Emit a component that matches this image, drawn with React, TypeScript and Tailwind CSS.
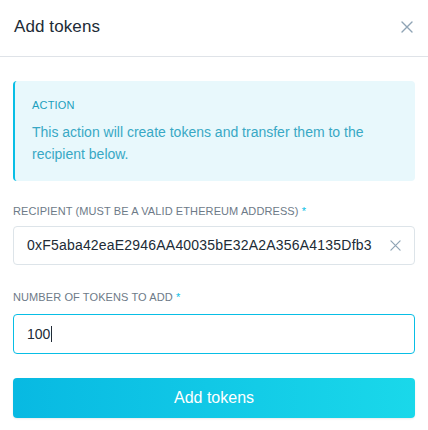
import React from "react";

const font = { fontFamily: '"Liberation Sans", Arial, sans-serif' };

function XIcon({ size, color, stroke = 1.5 }: { size: number; color: string; stroke?: number }) {
  return (
    <svg width={size} height={size} viewBox="0 0 12 12" fill="none">
      <path d="M1 1L11 11M11 1L1 11" stroke={color} strokeWidth={stroke} strokeLinecap="round" />
    </svg>
  );
}

export default function App() {
  return (
    <div className="w-[428px] h-[430px] bg-white overflow-hidden" style={font}>
      <div className="h-[57px] border-b border-[#dfe3e8] flex items-center justify-between pl-[14px] pr-[15px] pb-[2px]">
        <span className="text-[17px] text-[#212b36] tracking-[0.1px]">Add tokens</span>
        <XIcon size={12} color="#8fa4b5" stroke={1.4} />
      </div>
      <div className="px-[13px]">
        <div className="mt-[24px] h-[100px] rounded-[4px] border-l-2 border-[#08bee5] bg-[#e8f8fc] pl-[17px] pr-4 pt-[16px]">
          <div className="text-[11px] leading-[16px] text-[#1c9fbd] tracking-[0.2px]">ACTION</div>
          <div className="mt-[8px] text-[14px] leading-[22px] text-[#38a8c5]">
            This action will create tokens and transfer them to the recipient below.
          </div>
        </div>
        <div className="mt-[22px] text-[11px] leading-[16px] text-[#6d7a88] tracking-[0.1px]">
          RECIPIENT (MUST BE A VALID ETHEREUM ADDRESS) <span className="text-[#08bee5]">*</span>
        </div>
        <div className="mt-[7px] h-[39px] rounded-[4px] border border-[#dde4e9] flex items-center justify-between pl-[13px] pr-[13px]">
          <span className="text-[14px] text-[#212b36] tracking-[0.2px]">0xF5aba42eaE2946AA40035bE32A2A356A4135Dfb3</span>
          <XIcon size={11} color="#8fa4b5" stroke={1.3} />
        </div>
        <div className="mt-[24px] text-[11px] leading-[16px] text-[#6d7a88] tracking-[0.1px]">
          NUMBER OF TOKENS TO ADD <span className="text-[#08bee5]">*</span>
        </div>
        <div className="mt-[9px] h-[40px] rounded-[4px] border border-[#08bee5] flex items-center pl-[13px]">
          <span className="text-[14px] text-[#212b36]">100</span>
          <span className="w-px h-[16px] bg-[#212b36] ml-[1px]" />
        </div>
        <button className="mt-[24px] w-full h-[40px] rounded-[4px] bg-gradient-to-r from-[#08b9e2] to-[#1ad8ea] text-white text-[16px] shadow-[0_1px_2px_rgba(0,0,0,0.08)]">
          Add tokens
        </button>
      </div>
    </div>
  );
}
